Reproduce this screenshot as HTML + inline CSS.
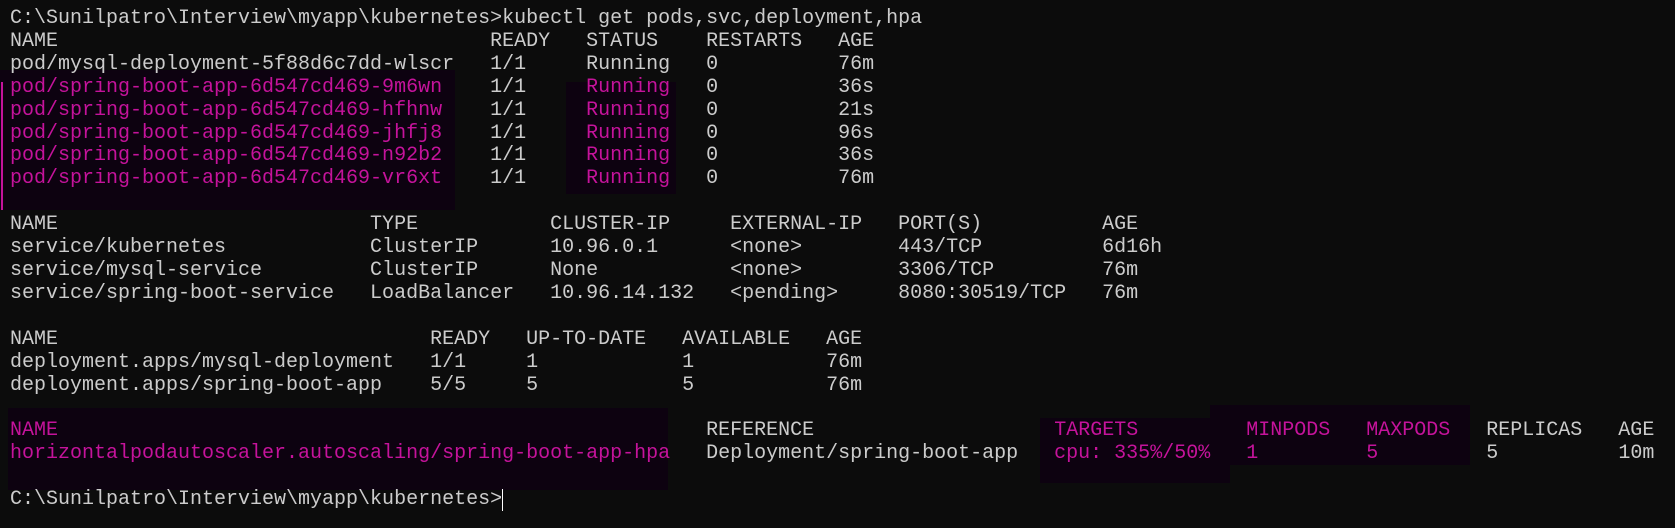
<!DOCTYPE html>
<html><head><meta charset="utf-8"><style>
html,body{margin:0;padding:0;background:#0c0c0c;width:1675px;height:528px;overflow:hidden;position:relative}
pre{position:absolute;left:10px;top:8px;margin:0;font-family:"Liberation Mono",monospace;font-size:20px;line-height:22.9px;color:#cccccc;white-space:pre}
.m{color:#c5139b}
.b{position:absolute;background:#0d0210}
</style></head><body>
<div class="b" style="left:0;top:70px;width:455px;height:140px"></div>
<div class="b" style="left:566px;top:82px;width:110px;height:112px"></div>
<div class="b" style="left:8px;top:408px;width:660px;height:82px"></div>
<div class="b" style="left:1040px;top:418px;width:190px;height:65px"></div>
<div class="b" style="left:1210px;top:405px;width:260px;height:60px"></div>
<div style="position:absolute;left:1px;top:82px;width:2px;height:128px;background:#c5139b"></div>
<pre>C:\Sunilpatro\Interview\myapp\kubernetes&gt;kubectl get pods,svc,deployment,hpa
NAME                                    READY   STATUS    RESTARTS   AGE
pod/mysql-deployment-5f88d6c7dd-wlscr   1/1     Running   0          76m
<span class="m">pod/spring-boot-app-6d547cd469-9m6wn</span>    1/1     <span class="m">Running</span>   0          36s
<span class="m">pod/spring-boot-app-6d547cd469-hfhnw</span>    1/1     <span class="m">Running</span>   0          21s
<span class="m">pod/spring-boot-app-6d547cd469-jhfj8</span>    1/1     <span class="m">Running</span>   0          96s
<span class="m">pod/spring-boot-app-6d547cd469-n92b2</span>    1/1     <span class="m">Running</span>   0          36s
<span class="m">pod/spring-boot-app-6d547cd469-vr6xt</span>    1/1     <span class="m">Running</span>   0          76m

NAME                          TYPE           CLUSTER-IP     EXTERNAL-IP   PORT(S)          AGE
service/kubernetes            ClusterIP      10.96.0.1      &lt;none&gt;        443/TCP          6d16h
service/mysql-service         ClusterIP      None           &lt;none&gt;        3306/TCP         76m
service/spring-boot-service   LoadBalancer   10.96.14.132   &lt;pending&gt;     8080:30519/TCP   76m

NAME                               READY   UP-TO-DATE   AVAILABLE   AGE
deployment.apps/mysql-deployment   1/1     1            1           76m
deployment.apps/spring-boot-app    5/5     5            5           76m

<span class="m">NAME</span>                                                      REFERENCE                    <span class="m">TARGETS</span>         <span class="m">MINPODS</span>   <span class="m">MAXPODS</span>   REPLICAS   AGE
<span class="m">horizontalpodautoscaler.autoscaling/spring-boot-app-hpa</span>   Deployment/spring-boot-app   <span class="m">cpu: 335%/50%</span>   <span class="m">1</span>         <span class="m">5</span>         5          10m

C:\Sunilpatro\Interview\myapp\kubernetes&gt;</pre>
<div style="position:absolute;left:502px;top:489px;width:1px;height:22px;background:#ffffff"></div>
</body></html>
